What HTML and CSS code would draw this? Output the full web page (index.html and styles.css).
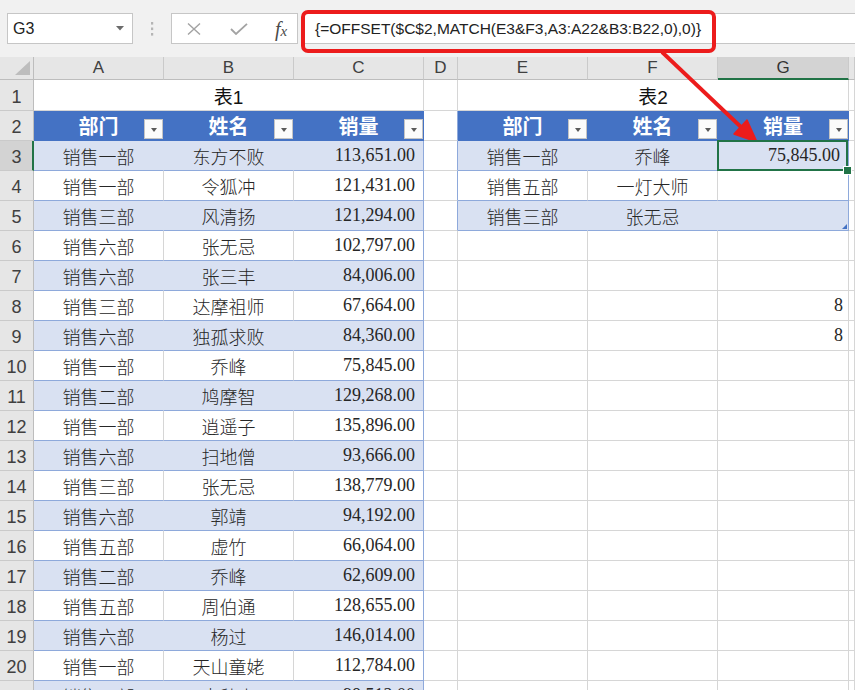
FILE: index.html
```html
<!DOCTYPE html>
<html lang="zh">
<head>
<meta charset="utf-8">
<title>Sheet</title>
<link rel="stylesheet" href="styles.css">
</head>
<body>
<div class="fbar">
  <div class="namebox"><span>G3</span><svg width="8" height="5" viewBox="0 0 8 5"><polygon points="0,0 8,0 4,4.5" fill="#6b6b6b"/></svg></div>
  <div class="grip"><svg width="4" height="14" viewBox="0 0 4 14"><rect x="1" y="0" width="2.2" height="2.6" fill="#b5b5b5"/><rect x="1" y="5.5" width="2.2" height="2.6" fill="#b5b5b5"/><rect x="1" y="11" width="2.2" height="2.6" fill="#b5b5b5"/></svg></div>
  <div class="fxbox">
    <svg class="ic-x" width="14" height="12" viewBox="0 0 14 12"><path d="M1 0.5 L13 11.5 M13 0.5 L1 11.5" stroke="#a3a3a3" stroke-width="1.4" fill="none"/></svg>
    <svg class="ic-ok" width="18" height="12" viewBox="0 0 18 12"><path d="M1 6 L6 11 L17 0.8" stroke="#a3a3a3" stroke-width="1.8" fill="none"/></svg>
    <span class="fx">f<span class="fxx">x</span></span>
  </div>
  <div class="finput">{=OFFSET($C$2,MATCH(E3&amp;F3,A3:A22&amp;B3:B22,0),0)}</div>
</div>

<div class="sheet">
  <!-- column headers -->
  <div class="ch corner"><svg width="15" height="14" viewBox="0 0 15 14"><polygon points="15,0 15,14 0,14" fill="#bdbdbd"/></svg></div>
  <div class="ch">A</div><div class="ch">B</div><div class="ch">C</div><div class="ch">D</div><div class="ch">E</div><div class="ch">F</div><div class="ch sel">G</div><div class="ch"></div>

  <!-- row 1 -->
  <div class="rh">1</div>
  <div class="c ttl">表1</div>
  <div class="c"></div>
  <div class="c ttl">表2</div>
  <div class="c"></div>

  <!-- row 2 -->
  <div class="rh">2</div>
  <div class="c th"><span class="lbl">部门</span><span class="fb"></span></div>
  <div class="c th"><span class="lbl">姓名</span><span class="fb"></span></div>
  <div class="c th"><span class="lbl">销量</span><span class="fb"></span></div>
  <div class="c dl"></div>
  <div class="c th"><span class="lbl">部门</span><span class="fb"></span></div>
  <div class="c th"><span class="lbl">姓名</span><span class="fb"></span></div>
  <div class="c th"><span class="lbl">销量</span><span class="fb"></span></div>
  <div class="c"></div>

  <!-- row 3 -->
  <div class="rh sel">3</div>
  <div class="c t b">销售一部</div><div class="c t b">东方不败</div><div class="c t b r n">113,651.00</div>
  <div class="c dl"></div>
  <div class="c t b">销售一部</div><div class="c t b">乔峰</div><div class="c t b r n cur">75,845.00</div>
  <div class="c"></div>

  <!-- row 4 -->
  <div class="rh">4</div>
  <div class="c t">销售一部</div><div class="c t">令狐冲</div><div class="c t r n">121,431.00</div>
  <div class="c dl"></div>
  <div class="c t">销售五部</div><div class="c t">一灯大师</div><div class="c t r n"></div>
  <div class="c"></div>

  <!-- row 5 -->
  <div class="rh">5</div>
  <div class="c t b">销售三部</div><div class="c t b">风清扬</div><div class="c t b r n">121,294.00</div>
  <div class="c dl"></div>
  <div class="c t b">销售三部</div><div class="c t b">张无忌</div><div class="c t b r n grab"></div>
  <div class="c"></div>

  <!-- row 6 -->
  <div class="rh">6</div>
  <div class="c t">销售六部</div><div class="c t">张无忌</div><div class="c t r n">102,797.00</div>
  <div class="c"></div><div class="c"></div><div class="c"></div><div class="c"></div><div class="c"></div>

  <!-- row 7 -->
  <div class="rh">7</div>
  <div class="c t b">销售六部</div><div class="c t b">张三丰</div><div class="c t b r n">84,006.00</div>
  <div class="c"></div><div class="c"></div><div class="c"></div><div class="c"></div><div class="c"></div>

  <!-- row 8 -->
  <div class="rh">8</div>
  <div class="c t">销售三部</div><div class="c t">达摩祖师</div><div class="c t r n">67,664.00</div>
  <div class="c"></div><div class="c"></div><div class="c"></div><div class="c n2">8</div><div class="c"></div>

  <!-- row 9 -->
  <div class="rh">9</div>
  <div class="c t b">销售六部</div><div class="c t b">独孤求败</div><div class="c t b r n">84,360.00</div>
  <div class="c"></div><div class="c"></div><div class="c"></div><div class="c n2">8</div><div class="c"></div>

  <!-- row 10 -->
  <div class="rh">10</div>
  <div class="c t">销售一部</div><div class="c t">乔峰</div><div class="c t r n">75,845.00</div>
  <div class="c"></div><div class="c"></div><div class="c"></div><div class="c"></div><div class="c"></div>

  <!-- row 11 -->
  <div class="rh">11</div>
  <div class="c t b">销售二部</div><div class="c t b">鸠摩智</div><div class="c t b r n">129,268.00</div>
  <div class="c"></div><div class="c"></div><div class="c"></div><div class="c"></div><div class="c"></div>

  <!-- row 12 -->
  <div class="rh">12</div>
  <div class="c t">销售一部</div><div class="c t">逍遥子</div><div class="c t r n">135,896.00</div>
  <div class="c"></div><div class="c"></div><div class="c"></div><div class="c"></div><div class="c"></div>

  <!-- row 13 -->
  <div class="rh">13</div>
  <div class="c t b">销售六部</div><div class="c t b">扫地僧</div><div class="c t b r n">93,666.00</div>
  <div class="c"></div><div class="c"></div><div class="c"></div><div class="c"></div><div class="c"></div>

  <!-- row 14 -->
  <div class="rh">14</div>
  <div class="c t">销售三部</div><div class="c t">张无忌</div><div class="c t r n">138,779.00</div>
  <div class="c"></div><div class="c"></div><div class="c"></div><div class="c"></div><div class="c"></div>

  <!-- row 15 -->
  <div class="rh">15</div>
  <div class="c t b">销售六部</div><div class="c t b">郭靖</div><div class="c t b r n">94,192.00</div>
  <div class="c"></div><div class="c"></div><div class="c"></div><div class="c"></div><div class="c"></div>

  <!-- row 16 -->
  <div class="rh">16</div>
  <div class="c t">销售五部</div><div class="c t">虚竹</div><div class="c t r n">66,064.00</div>
  <div class="c"></div><div class="c"></div><div class="c"></div><div class="c"></div><div class="c"></div>

  <!-- row 17 -->
  <div class="rh">17</div>
  <div class="c t b">销售二部</div><div class="c t b">乔峰</div><div class="c t b r n">62,609.00</div>
  <div class="c"></div><div class="c"></div><div class="c"></div><div class="c"></div><div class="c"></div>

  <!-- row 18 -->
  <div class="rh">18</div>
  <div class="c t">销售五部</div><div class="c t">周伯通</div><div class="c t r n">128,655.00</div>
  <div class="c"></div><div class="c"></div><div class="c"></div><div class="c"></div><div class="c"></div>

  <!-- row 19 -->
  <div class="rh">19</div>
  <div class="c t b">销售六部</div><div class="c t b">杨过</div><div class="c t b r n">146,014.00</div>
  <div class="c"></div><div class="c"></div><div class="c"></div><div class="c"></div><div class="c"></div>

  <!-- row 20 -->
  <div class="rh">20</div>
  <div class="c t">销售一部</div><div class="c t">天山童姥</div><div class="c t r n">112,784.00</div>
  <div class="c"></div><div class="c"></div><div class="c"></div><div class="c"></div><div class="c"></div>

  <!-- row 21 -->
  <div class="rh">21</div>
  <div class="c t b">销售五部</div><div class="c t b">李秋水</div><div class="c t b r n">98,512.00</div>
  <div class="c"></div><div class="c"></div><div class="c"></div><div class="c"></div><div class="c"></div>
</div>

<div class="redbox"></div>
<svg class="arrow" width="855" height="690" viewBox="0 0 855 690">
  <line x1="662" y1="52" x2="742" y2="128" stroke="#ec1c1c" stroke-width="3.8"/>
  <polygon points="757,142 734,134 747,120" fill="#ec1c1c" stroke="#ec1c1c" stroke-width="1.5" stroke-linejoin="round"/>
</svg>
</body>
</html>
```

FILE: styles.css
```css
* {
  box-sizing: border-box;
  margin: 0;
  padding: 0;
}

body {
  width: 855px;
  height: 690px;
  overflow: hidden;
  position: relative;
  background: #ffffff;
  font-family: "Liberation Sans", "Noto Sans CJK SC", sans-serif;
}

/* formula bar */
.fbar {
  height: 57px;
  background: #f1f1f1;
  display: flex;
  align-items: flex-start;
  padding: 13px 0 0 7px;
}

.namebox {
  width: 126px;
  height: 31px;
  background: #fff;
  border: 1px solid #c6c6c6;
  display: flex;
  align-items: center;
  justify-content: space-between;
  padding: 0 8px 0 5px;
  font-size: 16px;
  color: #222;
}

.grip {
  width: 38px;
  height: 31px;
  display: flex;
  align-items: center;
  justify-content: center;
}

.fxbox {
  width: 127px;
  height: 31px;
  background: #fff;
  border: 1px solid #c6c6c6;
  display: flex;
  align-items: center;
  padding-left: 15px;
}

.ic-ok {
  margin-left: 29px;
}

.fx {
  margin-left: 27px;
  font-family: "Liberation Serif", serif;
  font-style: italic;
  font-size: 20px;
  color: #4a4a4a;
  line-height: 1;
}

.fxx {
  font-size: 15px;
}

.finput {
  flex: 1;
  height: 31px;
  margin-left: 4px;
  background: #fff;
  border: 1px solid #c6c6c6;
  border-right: none;
  display: flex;
  align-items: center;
  padding-left: 12px;
  font-size: 15.5px;
  color: #222;
  white-space: nowrap;
}

/* sheet grid */
.sheet {
  display: grid;
  grid-template-columns: 34px 130px 130px 130px 34px 130px 130px 131px 1fr;
  grid-template-rows: 23px 31px;
  grid-auto-rows: 30px;
}

.ch {
  background: #e6e6e6;
  border-right: 1px solid #cacaca;
  border-bottom: 1px solid #bdbdbd;
  display: flex;
  align-items: center;
  justify-content: center;
  font-size: 17px;
  color: #404040;
}

.ch.sel {
  background: #d3d3d3;
  border-bottom: 2px solid #217346;
  color: #333;
}

.corner {
  justify-content: flex-end;
  align-items: flex-end;
  padding: 0 3px 4px 0;
  border-right-color: #bdbdbd;
}

.rh {
  background: #e6e6e6;
  border-right: 1px solid #bdbdbd;
  border-bottom: 1px solid #cacaca;
  display: flex;
  align-items: flex-end;
  justify-content: center;
  padding-bottom: 2px;
  font-size: 18px;
  color: #404040;
}

.rh.sel {
  background: #d3d3d3;
  border-right: 2px solid #217346;
  padding-left: 1px;
}

.c {
  border-right: 1px solid #d6d6d6;
  border-bottom: 1px solid #d6d6d6;
  display: flex;
  align-items: center;
  justify-content: center;
  font-family: "Liberation Serif", "Noto Sans CJK SC", serif;
  font-size: 18px;
  font-weight: 300;
  color: #262626;
  white-space: nowrap;
  overflow: hidden;
}

.ttl {
  grid-column: span 3;
  font-family: "Liberation Sans", "Noto Sans CJK SC", sans-serif;
  font-weight: 400;
  font-size: 19px;
  color: #111;
}

.t {
  border-bottom-color: #8ea9db;
}

.b {
  background: #d9e1f2;
  border-right-color: #d9e1f2;
}

.r {
  border-right-color: #8ea9db;
}

.dl {
  border-right-color: #8ea9db;
}

.n {
  justify-content: flex-end;
  padding-right: 8px;
  font-weight: 400;
}

.n2 {
  justify-content: flex-end;
  padding-right: 5px;
  font-weight: 400;
}

.th {
  background: #4472c4;
  border-right-color: #4472c4;
  border-bottom-color: #4472c4;
  display: grid;
  grid-template-columns: 20px 1fr 20px;
  align-items: center;
  color: #fff;
  font-family: "Noto Sans CJK SC", sans-serif;
  font-weight: 700;
  font-size: 20px;
}

.lbl {
  grid-column: 2;
  text-align: center;
  line-height: 1;
}

.fb {
  grid-column: 3;
  justify-self: end;
  align-self: end;
  width: 19px;
  height: 20px;
  margin-bottom: 1px;
  background: #fbfbfb;
  border: 1px solid #c4c4c4;
  display: flex;
  align-items: center;
  justify-content: center;
}

.fb::before {
  content: "";
  margin-top: 2px;
  border-left: 3.5px solid transparent;
  border-right: 3.5px solid transparent;
  border-top: 4px solid #595959;
}

/* active cell */
.cur {
  position: relative;
  overflow: visible;
  z-index: 3;
}

.cur::after {
  content: "";
  position: absolute;
  left: -1px;
  top: -1px;
  right: 0;
  bottom: -1px;
  border: 2px solid #217346;
}

.cur::before {
  content: "";
  position: absolute;
  right: -4px;
  bottom: -5px;
  width: 7px;
  height: 7px;
  background: #217346;
  border: 1px solid #fff;
  z-index: 4;
}

.grab {
  position: relative;
}

.grab::after {
  content: "";
  position: absolute;
  right: 1px;
  bottom: 1px;
  width: 5px;
  height: 5px;
  background: #4472c4;
  clip-path: polygon(100% 0, 100% 100%, 0 100%);
}

/* annotations */
.redbox {
  position: absolute;
  left: 301px;
  top: 10px;
  width: 415px;
  height: 43px;
  border: 4px solid #ec1c1c;
  border-radius: 7px;
}

.arrow {
  position: absolute;
  left: 0;
  top: 0;
  pointer-events: none;
}
```
